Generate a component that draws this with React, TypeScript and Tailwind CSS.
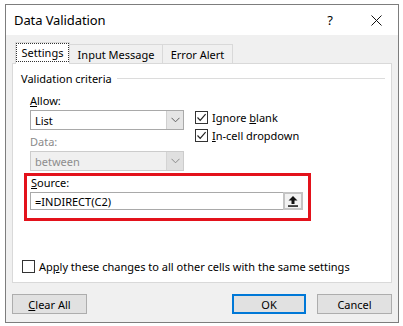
import React from "react";

const font = { fontFamily: '"Noto Sans", "Open Sans", sans-serif' };

function Chevron({ color = "#606060" }: { color?: string }) {
  return (
    <svg width="9" height="6" viewBox="0 0 9 6">
      <path d="M0.5 0.8 L4.5 4.8 L8.5 0.8" fill="none" stroke={color} strokeWidth="1" />
    </svg>
  );
}

function Check({ checked }: { checked: boolean }) {
  return (
    <div className="w-[13px] h-[13px] border border-[#333333] bg-white flex items-center justify-center shrink-0">
      {checked && (
        <svg width="11" height="11" viewBox="0 0 11 11">
          <path d="M1.5 5.5 L4.2 8.3 L9.6 2.2" fill="none" stroke="#222" strokeWidth="1.2" />
        </svg>
      )}
    </div>
  );
}

export default function App() {
  return (
    <div className="w-[403px] h-[326px] bg-white pt-[4px] pl-[5px] text-[11px] text-black leading-none" style={font}>
      <div className="w-[394px] h-[319px] border border-[#7d7d7d] bg-[#f0f0f0] flex flex-col">
        {/* title bar */}
        <div className="h-[30px] bg-white flex items-center pl-[8px] shrink-0">
          <span className="text-[13px] tracking-[-0.1px]">Data Validation</span>
          <span className="ml-auto text-[13px] mr-[38px]">?</span>
          <svg width="11" height="11" viewBox="0 0 11 11" className="mr-[16px]">
            <path d="M0.5 0.5 L10.5 10.5 M10.5 0.5 L0.5 10.5" stroke="#111" strokeWidth="1" />
          </svg>
        </div>
        {/* body */}
        <div className="px-[6px] pt-[7px] flex flex-col">
          {/* tabs */}
          <div className="h-[22px] flex items-end pl-[3px] relative z-10">
            <div className="w-[55px] h-[22px] bg-white border-l border-t border-r border-[#d9d9d9] flex items-stretch pb-[2px]">
              <div className="flex-1 border border-dotted border-[#333] flex items-center justify-center">
                Settings
              </div>
            </div>
            <div className="w-[93px] h-[20px] bg-[#f0f0f0] border-t border-r border-b border-[#d9d9d9] flex items-center justify-center">
              Input Message
            </div>
            <div className="w-[70px] h-[20px] bg-[#f0f0f0] border-t border-r border-b border-[#d9d9d9] flex items-center justify-center">
              Error Alert
            </div>
          </div>
          {/* panel */}
          <div className="-mt-px h-[220px] bg-white border border-[#d9d9d9] pt-[6px] pl-[8px] pr-[6px] flex flex-col">
            <div className="h-[16px] flex items-center gap-[5px]">
              <span>Validation criteria</span>
              <div className="flex-1 h-px bg-[#dcdcdc]" />
            </div>
            <div className="pl-[9px] mt-[6px] flex">
              <div className="w-[154px] flex flex-col">
                <div className="h-[16px] flex items-center">
                  <span><span className="underline">A</span>llow:</span>
                </div>
                <div className="mt-[2px] h-[20px] border border-[#a9a9a9] bg-white flex items-center">
                  <span className="pl-[4px] flex-1">List</span>
                  <div className="w-[17px] h-full bg-[#e5e5e5] border-l border-[#d0d0d0] flex items-center justify-center">
                    <Chevron />
                  </div>
                </div>
                <div className="mt-[3px] h-[16px] flex items-center text-[#8a8a8a]">Data:</div>
                <div className="mt-[2px] h-[20px] border border-[#cccccc] bg-[#f0f0f0] flex items-center text-[#8d8d8d]">
                  <span className="pl-[4px] flex-1">between</span>
                  <div className="w-[17px] h-full bg-[#e0e0e0] border-l border-[#d4d4d4] flex items-center justify-center">
                    <Chevron color="#8a8a8a" />
                  </div>
                </div>
              </div>
              <div className="ml-[11px] pt-[16px] flex flex-col">
                <div className="h-[18px] flex items-center gap-[4px]">
                  <Check checked />
                  <span>Ignore <span className="underline">b</span>lank</span>
                </div>
                <div className="h-[18px] flex items-center gap-[4px]">
                  <Check checked />
                  <span><span className="underline">I</span>n-cell dropdown</span>
                </div>
              </div>
            </div>
            {/* source red box */}
            <div className="ml-[3px] mt-[2px] w-[287px] h-[48px] border-[3px] border-[#e3121b] flex flex-col">
              <div className="pl-[4px] h-[12px] flex items-center">
                <span><span className="underline">S</span>ource:</span>
              </div>
              <div className="ml-[3px] mt-[4px] w-[273px] h-[18px] border border-[#a9a9a9] bg-white flex items-center">
                <span className="pl-[4px] flex-1">=INDIRECT(C2)</span>
                <div className="w-[20px] h-[18px] -mr-px border-2 border-[#c4c4c4] bg-[#f2f2f2] flex items-center justify-center">
                  <svg width="10" height="11" viewBox="0 0 10 11">
                    <path d="M5 0 L9.5 4.5 L6.5 4.5 L6.5 8 L3.5 8 L3.5 4.5 L0.5 4.5 Z" fill="#111" />
                    <rect x="0" y="9.3" width="10" height="1.5" fill="#111" />
                  </svg>
                </div>
              </div>
            </div>
            {/* apply */}
            <div className="mt-[37px] ml-[1px] h-[16px] flex items-center gap-[4px]">
              <Check checked={false} />
              <span>Ap<span className="underline">p</span>ly these changes to all other cells with the same settings</span>
            </div>
          </div>
          {/* buttons */}
          <div className="mt-[11px] flex">
            <div className="w-[75px] h-[20px] border border-[#adadad] bg-[#e1e1e1] flex items-center justify-center">
              <span><span className="underline">C</span>lear All</span>
            </div>
            <div className="ml-auto w-[74px] h-[20px] border-2 border-[#0078d7] bg-[#e1e1e1] flex items-center justify-center">
              OK
            </div>
            <div className="ml-[11px] w-[75px] h-[20px] border border-[#adadad] bg-[#e1e1e1] flex items-center justify-center">
              Cancel
            </div>
          </div>
        </div>
      </div>
    </div>
  );
}
